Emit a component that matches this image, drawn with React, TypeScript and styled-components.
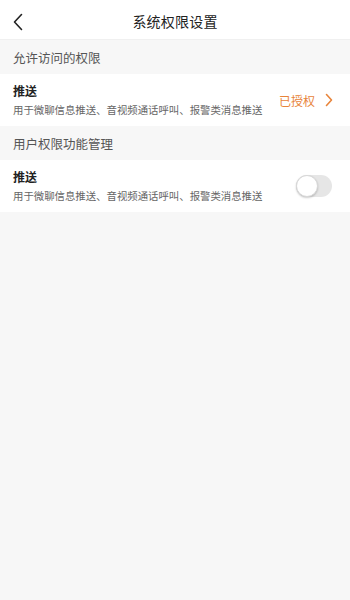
import React, { useState } from 'react';
import styled, { createGlobalStyle } from 'styled-components';

const GlobalStyle = createGlobalStyle`
  html, body {
    margin: 0;
    padding: 0;
    background: #f7f7f7;
    font-family: "Noto Sans CJK SC", "Noto Sans", sans-serif;
  }
`;

const Page = styled.div`
  width: 350px;
  min-height: 600px;
  background: #f7f7f7;
`;

const NavBar = styled.div`
  height: 40px;
  background: #ffffff;
  display: flex;
  align-items: center;
  justify-content: center;
  position: relative;
  border-bottom: 1px solid #f0f0f0;
  box-sizing: border-box;
`;

const BackButton = styled.button`
  position: absolute;
  left: 8px;
  top: 11px;
  width: 20px;
  height: 22px;
  padding: 0;
  border: 0;
  background: none;
  display: flex;
  align-items: center;
  justify-content: center;
`;

const Title = styled.div`
  font-size: 14px;
  color: #222;
  letter-spacing: 0.2px;
  margin-top: 3px;
`;

const SectionHeader = styled.div<{ $height: number }>`
  height: ${({ $height }) => $height}px;
  display: flex;
  align-items: center;
  padding-left: 13px;
  font-size: 12.5px;
  color: #555;
`;

const Row = styled.div<{ $height: number }>`
  height: ${({ $height }) => $height}px;
  background: #ffffff;
  display: flex;
  align-items: center;
  padding: 0 18px 0 13px;
`;

const RowText = styled.div`
  flex: 1;
  display: flex;
  flex-direction: column;
`;

const RowTitle = styled.div`
  font-size: 12px;
  font-weight: 700;
  color: #222;
  line-height: 16px;
`;

const RowDesc = styled.div`
  font-size: 10.4px;
  color: #666;
  line-height: 14px;
  margin-top: 4px;
`;

const Status = styled.div`
  display: flex;
  align-items: center;
  gap: 10px;
  color: #e8843a;
  font-size: 12px;
  margin-right: -1px;
`;

const Switch = styled.button<{ $on: boolean }>`
  width: 36px;
  height: 22px;
  border-radius: 11px;
  border: 0;
  padding: 0;
  background: ${({ $on }) => ($on ? '#e8843a' : '#e6e6e6')};
  position: relative;
`;

const Knob = styled.span<{ $on: boolean }>`
  position: absolute;
  top: 0;
  left: ${({ $on }) => ($on ? '14px' : '0')};
  width: 22px;
  height: 22px;
  box-sizing: border-box;
  border: 1px solid #d8d8d8;
  border-radius: 50%;
  background: #ffffff;
  box-shadow: 0 1px 2px rgba(0, 0, 0, 0.2);
`;

const desc = '用于微聊信息推送、音视频通话呼叫、报警类消息推送';

const App = () => {
  const [on, setOn] = useState(false);
  return (
    <Page>
      <GlobalStyle />
      <NavBar>
        <BackButton>
          <svg width="12" height="18" viewBox="0 0 12 18">
            <path d="M9.5 1.5 L2.5 9 L9.5 16.5" fill="none" stroke="#222" strokeWidth="1.6" strokeLinecap="round" strokeLinejoin="round" />
          </svg>
        </BackButton>
        <Title>系统权限设置</Title>
      </NavBar>
      <SectionHeader $height={34}>允许访问的权限</SectionHeader>
      <Row $height={52}>
        <RowText>
          <RowTitle>推送</RowTitle>
          <RowDesc>{desc}</RowDesc>
        </RowText>
        <Status>
          已授权
          <svg width="8" height="14" viewBox="0 0 8 14">
            <path d="M1.5 1.5 L6.5 7 L1.5 12.5" fill="none" stroke="#e8843a" strokeWidth="1.6" strokeLinecap="round" strokeLinejoin="round" />
          </svg>
        </Status>
      </Row>
      <SectionHeader $height={34}>用户权限功能管理</SectionHeader>
      <Row $height={52}>
        <RowText>
          <RowTitle>推送</RowTitle>
          <RowDesc>{desc}</RowDesc>
        </RowText>
        <Switch $on={on} onClick={() => setOn(!on)}>
          <Knob $on={on} />
        </Switch>
      </Row>
    </Page>
  );
};

export default App;
